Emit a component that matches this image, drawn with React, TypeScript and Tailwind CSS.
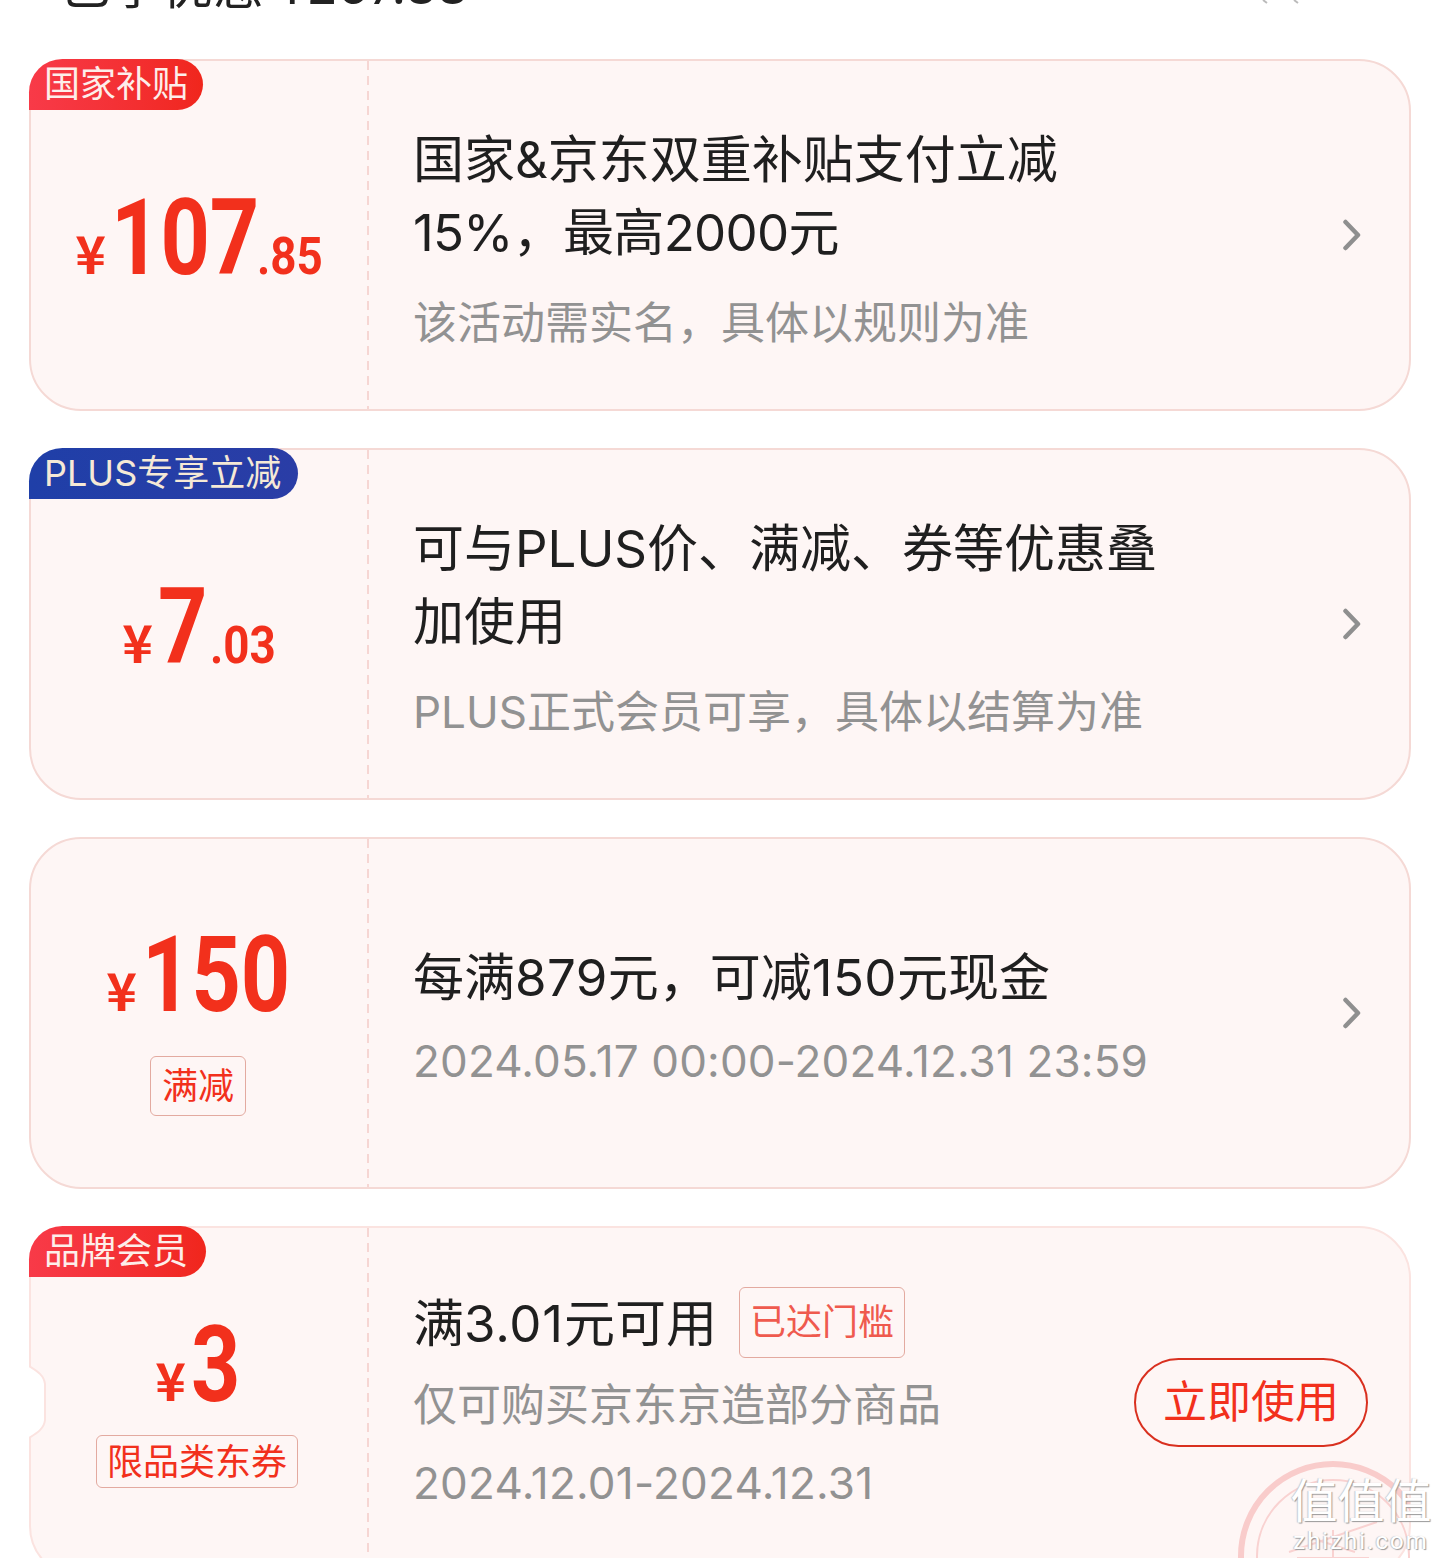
const SANS = "font-['Inter','Noto_Sans_CJK_SC',sans-serif]";

function Chevron() {
  return (
    <svg width="18" height="32" viewBox="0 0 18 32" fill="none" className="mr-[7px] shrink-0">
      <path d="M2.5 3 L15 16 L2.5 29" stroke="#8f8f8f" strokeWidth="4.5" strokeLinecap="round" strokeLinejoin="round" />
    </svg>
  );
}

// The digits are squeezed horizontally, so each box carries its own final width
function Price({ whole, wholeWidth, cents }: { whole: string; wholeWidth: string; cents?: string }) {
  return (
    <div className="flex items-baseline justify-center whitespace-nowrap text-[#f2301c] font-['Roboto',sans-serif] font-bold">
      <span className="mr-[5px] text-[52px] leading-none font-['Noto_Sans_CJK_SC',sans-serif]">¥</span>
      <span className={`${wholeWidth} inline-block origin-left scale-x-[.82] text-[105px] leading-none`}>{whole}</span>
      {cents && <span className="inline-block w-[66px] origin-left scale-x-[.88] text-[52px] leading-none">{cents}</span>}
    </div>
  );
}

function Ribbon({ label, width, blue }: { label: string; width: string; blue?: boolean }) {
  return (
    <div
      className={`${width} absolute -left-[2px] -top-[2px] z-10 flex h-[51px] items-center whitespace-nowrap rounded-tl-[34px] rounded-tr-[26px] rounded-br-[26px] pb-[2px] pl-[15px] text-[36px] leading-none ${
        blue
          ? "bg-gradient-to-r from-[#1f3fa8] to-[#2a3da6] text-[#f5e9d6]"
          : "bg-gradient-to-r from-[#f83a48] to-[#f0261c] text-[#fdeeea]"
      }`}
    >
      {label}
    </div>
  );
}

function CouponCard({
  ribbon,
  left,
  children,
  right,
  notched,
}: {
  ribbon?: React.ReactNode;
  left: React.ReactNode;
  children: React.ReactNode;
  right?: React.ReactNode;
  notched?: boolean;
}) {
  return (
    <div
      className={`relative flex h-[352px] shrink-0 rounded-[52px] border-2 bg-[#fef6f5] ${
        notched ? "border-[#fbe3e0]" : "border-[#f5d9d5]"
      }`}
    >
      {ribbon}
      {notched && (
        <svg width="18" height="72" viewBox="0 0 18 72" className="absolute -left-[2px] top-[138px] z-10">
          <path d="M0 0 C8 5 15 9 16 18 L16 54 C15 63 8 67 0 72 Z" fill="#ffffff" />
          <path d="M0 0 C8 5 15 9 16 18 L16 54 C15 63 8 67 0 72" fill="none" stroke="#fbe3e0" strokeWidth="2" />
        </svg>
      )}
      <div className="flex w-[336px] shrink-0 flex-col items-center justify-center">{left}</div>
      <div className="w-[2px] shrink-0 bg-[repeating-linear-gradient(to_bottom,#f6d6d3_0,#f6d6d3_9px,transparent_9px,transparent_15px)]" />
      <div className="flex min-w-0 flex-1 items-center pl-[44px] pr-[41px]">
        <div className="min-w-0 flex-1">{children}</div>
        {right ?? <Chevron />}
      </div>
    </div>
  );
}

function Watermark() {
  return (
    <>
      <svg width="173" height="98" viewBox="0 0 173 98" fill="none" className="absolute left-[1237px] top-[1460px]">
        <circle cx="96" cy="96" r="92" stroke="#f9cccb" strokeWidth="6" />
        <circle cx="96" cy="96" r="76" stroke="#f9d2d1" strokeWidth="2" />
        <path d="M52 92 L140 62 M60 98 L132 98 M96 70 L96 98 M74 78 L118 92" stroke="#f9d2d1" strokeWidth="2" />
      </svg>
      <div className="absolute left-[1289px] top-[1474px] flex w-[144px] flex-col items-center whitespace-nowrap text-white [text-shadow:1px_1px_1px_#9a9a9a,-1px_0_1px_#c8c8c8]">
        <span className="text-[47px] leading-[54px]">值值值</span>
        <span className="text-[24px] leading-[26px] font-['Roboto',sans-serif] tracking-[2px]">zhizhi.com</span>
      </div>
    </>
  );
}

export default function App() {
  return (
    <div className={`${SANS} relative h-[1558px] w-[1440px] overflow-hidden bg-white`}>
      {/* summary row, scrolled mostly out of view */}
      <div className="flex h-[59px] items-start justify-between overflow-hidden pl-[60px] pr-[136px]">
        <div className="-mt-[44px] text-[51px] leading-[60px] text-[#222] whitespace-nowrap">已享优惠 ¥267.88</div>
        <svg width="44" height="4" viewBox="0 0 44 4">
          <path d="M3 0 L7 3 M34 0 L38 3" stroke="#bbb" strokeWidth="2" />
        </svg>
      </div>

      <div className="flex flex-col gap-[37px] px-[29px]">
        <CouponCard
          ribbon={<Ribbon label="国家补贴" width="w-[174px]" />}
          left={
            <div className="mt-[6px]">
              <Price whole="107" wholeWidth="w-[146px]" cents=".85" />
            </div>
          }
        >
          <div className="mt-[6px] text-[51px] leading-[73px] text-[#1f1f1f] whitespace-nowrap">
            <div>国家&amp;京东双重补贴支付立减</div>
            <div className="tracking-[-.7px]">15%，最高2000元</div>
          </div>
          <div className="mt-[24px] text-[44px] leading-[60px] text-[#929292] whitespace-nowrap">该活动需实名，具体以规则为准</div>
        </CouponCard>

        <CouponCard
          ribbon={<Ribbon label="PLUS专享立减" width="w-[269px]" blue />}
          left={
            <div className="mt-[6px]">
              <Price whole="7" wholeWidth="w-[52px]" cents=".03" />
            </div>
          }
        >
          <div className="mt-[6px] w-[760px] text-[51px] leading-[73px] text-[#1f1f1f]">可与PLUS价、满减、券等优惠叠加使用</div>
          <div className="mt-[24px] text-[44px] leading-[60px] text-[#929292] whitespace-nowrap">PLUS正式会员可享，具体以结算为准</div>
        </CouponCard>

        <CouponCard
          left={
            <div className="mt-[12px] flex flex-col items-center">
              <Price whole="150" wholeWidth="w-[150px]" />
              <div className="-ml-[2px] mt-[28px] flex h-[60px] w-[96px] items-center justify-center rounded-[6px] border border-[#e3aaa0] text-[36px] leading-none text-[#f2301c]">满减</div>
            </div>
          }
        >
          <div className="mt-[6px] text-[51px] leading-[74px] text-[#1f1f1f] whitespace-nowrap">
            每满<span className="tracking-[.4px]">879</span>元，可减<span className="tracking-[.4px]">150</span>元现金
          </div>
          <div className="mt-[16px] text-[44px] leading-[60px] tracking-[.15px] text-[#929292] whitespace-nowrap">2024.05.17 00:00-2024.12.31 23:59</div>
        </CouponCard>

        <CouponCard
          ribbon={<Ribbon label="品牌会员" width="w-[177px]" />}
          notched
          left={
            <div className="-mt-[3px] flex flex-col items-center">
              <Price whole="3" wholeWidth="w-[52px]" />
              <div className="-ml-[4px] mt-[17px] flex h-[53px] w-[202px] items-center justify-center rounded-[6px] border border-[#e3aaa0] text-[36px] leading-none text-[#f2301c]">限品类东券</div>
            </div>
          }
          right={
            <div className="flex h-[89px] w-[234px] shrink-0 items-center justify-center rounded-full border-2 border-[#d9301f] text-[44px] leading-none text-[#f2301c]">立即使用</div>
          }
        >
          <div className="-mt-[4px] flex items-center">
            <span className="text-[51px] leading-[74px] text-[#1f1f1f] whitespace-nowrap">
              满<span className="tracking-[.8px]">3.01</span>元可用
            </span>
            <span className="-mt-[4px] ml-[22px] flex h-[71px] w-[166px] items-center justify-center rounded-[6px] border border-[#e3aaa0] text-[36px] leading-none text-[#ef5a4e]">已达门槛</span>
          </div>
          <div className="mt-[14px] text-[44px] leading-[60px] text-[#929292] whitespace-nowrap">仅可购买京东京造部分商品</div>
          <div className="mt-[18px] text-[44px] leading-[60px] tracking-[.25px] text-[#929292] whitespace-nowrap">2024.12.01-2024.12.31</div>
        </CouponCard>
      </div>

      <Watermark />
    </div>
  );
}
